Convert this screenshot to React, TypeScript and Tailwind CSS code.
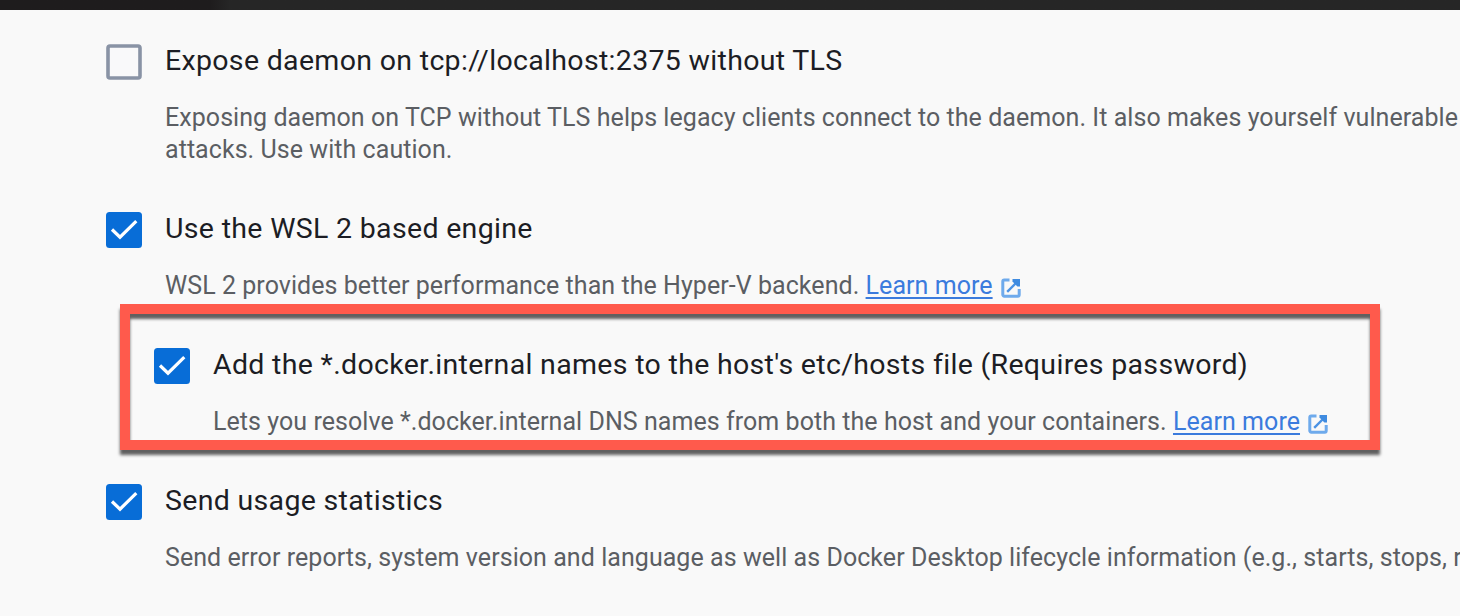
import type { ReactNode } from 'react';

function Box({ checked }: { checked?: boolean }) {
  return (
    <span role="checkbox" aria-checked={!!checked} className="shrink-0 w-9 h-9">
      <svg viewBox="0 0 36 36" className="block w-9 h-9">
        {checked ? (
          <>
            <rect width="36" height="36" rx="3.5" fill="#086dd7" />
            <path d="M6 17.5l8 7.7L30.3 9.2" fill="none" stroke="#fff" strokeWidth="3.2" />
          </>
        ) : (
          <rect x="2" y="2" width="32" height="32" rx="2" fill="#f9f9fa" stroke="#8993a5" strokeWidth="3.6" />
        )}
      </svg>
    </span>
  );
}

function LearnMore() {
  return (
    <a className="text-[#3b7bdd]">
      <span className="underline underline-offset-[3px] decoration-2">Learn more</span>
      <svg viewBox="0 0 20 20" className="inline-block w-5 h-5 ml-2 -mb-px" fill="none">
        <path
          d="M8.5 2H3.2A1.4 1.4 0 0 0 1.8 3.4v13.4a1.4 1.4 0 0 0 1.4 1.4h13.6a1.4 1.4 0 0 0 1.4-1.4V11"
          stroke="#6eaaec"
          strokeWidth="3"
        />
        <path d="M6.2 13.8L16 4" stroke="#4a92e4" strokeWidth="2.4" />
        <path d="M11.5 1H19v7.5h-2.6L11.5 3.6z" fill="#3f8be0" />
      </svg>
    </a>
  );
}

function Setting({ checked, title, children }: { checked?: boolean; title: string; children: ReactNode }) {
  return (
    <div className="flex gap-[23px]">
      <Box checked={checked} />
      <div className="whitespace-nowrap pt-px">
        <div className="h-[57px] text-[28.5px] leading-8 tracking-[0.32px] text-[#1c1d24]">{title}</div>
        <div className="text-[25px] leading-8 tracking-[0.055px] text-[#5b5e63]">{children}</div>
      </div>
    </div>
  );
}

export default function App() {
  return (
    <div className="w-[1460px] h-[616px] overflow-hidden bg-[#f9f9f9] font-['Roboto',sans-serif]">
      <div className="h-[10px] bg-linear-to-r from-[#1e1c1d] from-[210px] to-[#262626] to-[230px]" />
      <div className="pl-[106px] pt-[34px]">
        <div className="h-[168px]">
          <Setting title="Expose daemon on tcp://localhost:2375 without TLS">
            Exposing daemon on TCP without TLS helps legacy clients connect to the daemon. It also makes yourself vulnerable
            <br />
            attacks. Use with caution.
          </Setting>
        </div>
        <div className="h-[92px]">
          <Setting checked title="Use the WSL 2 based engine">
            WSL 2 provides better performance than the Hyper-V backend. <LearnMore />
          </Setting>
        </div>
        <div className="ml-[14px] w-[1260px] h-[146px] border-[10px] border-[#ff5a4c] pl-6 pt-[34px] shadow-[0_5px_3px_#606060,inset_0_5px_3px_#606060]">
          <Setting checked title="Add the *.docker.internal names to the host's etc/hosts file (Requires password)">
            Lets you resolve *.docker.internal DNS names from both the host and your containers. <LearnMore />
          </Setting>
        </div>
        <div className="mt-[34px]">
          <Setting checked title="Send usage statistics">
            Send error reports, system version and language as well as Docker Desktop lifecycle information (e.g., starts, stops, r
          </Setting>
        </div>
      </div>
    </div>
  );
}
